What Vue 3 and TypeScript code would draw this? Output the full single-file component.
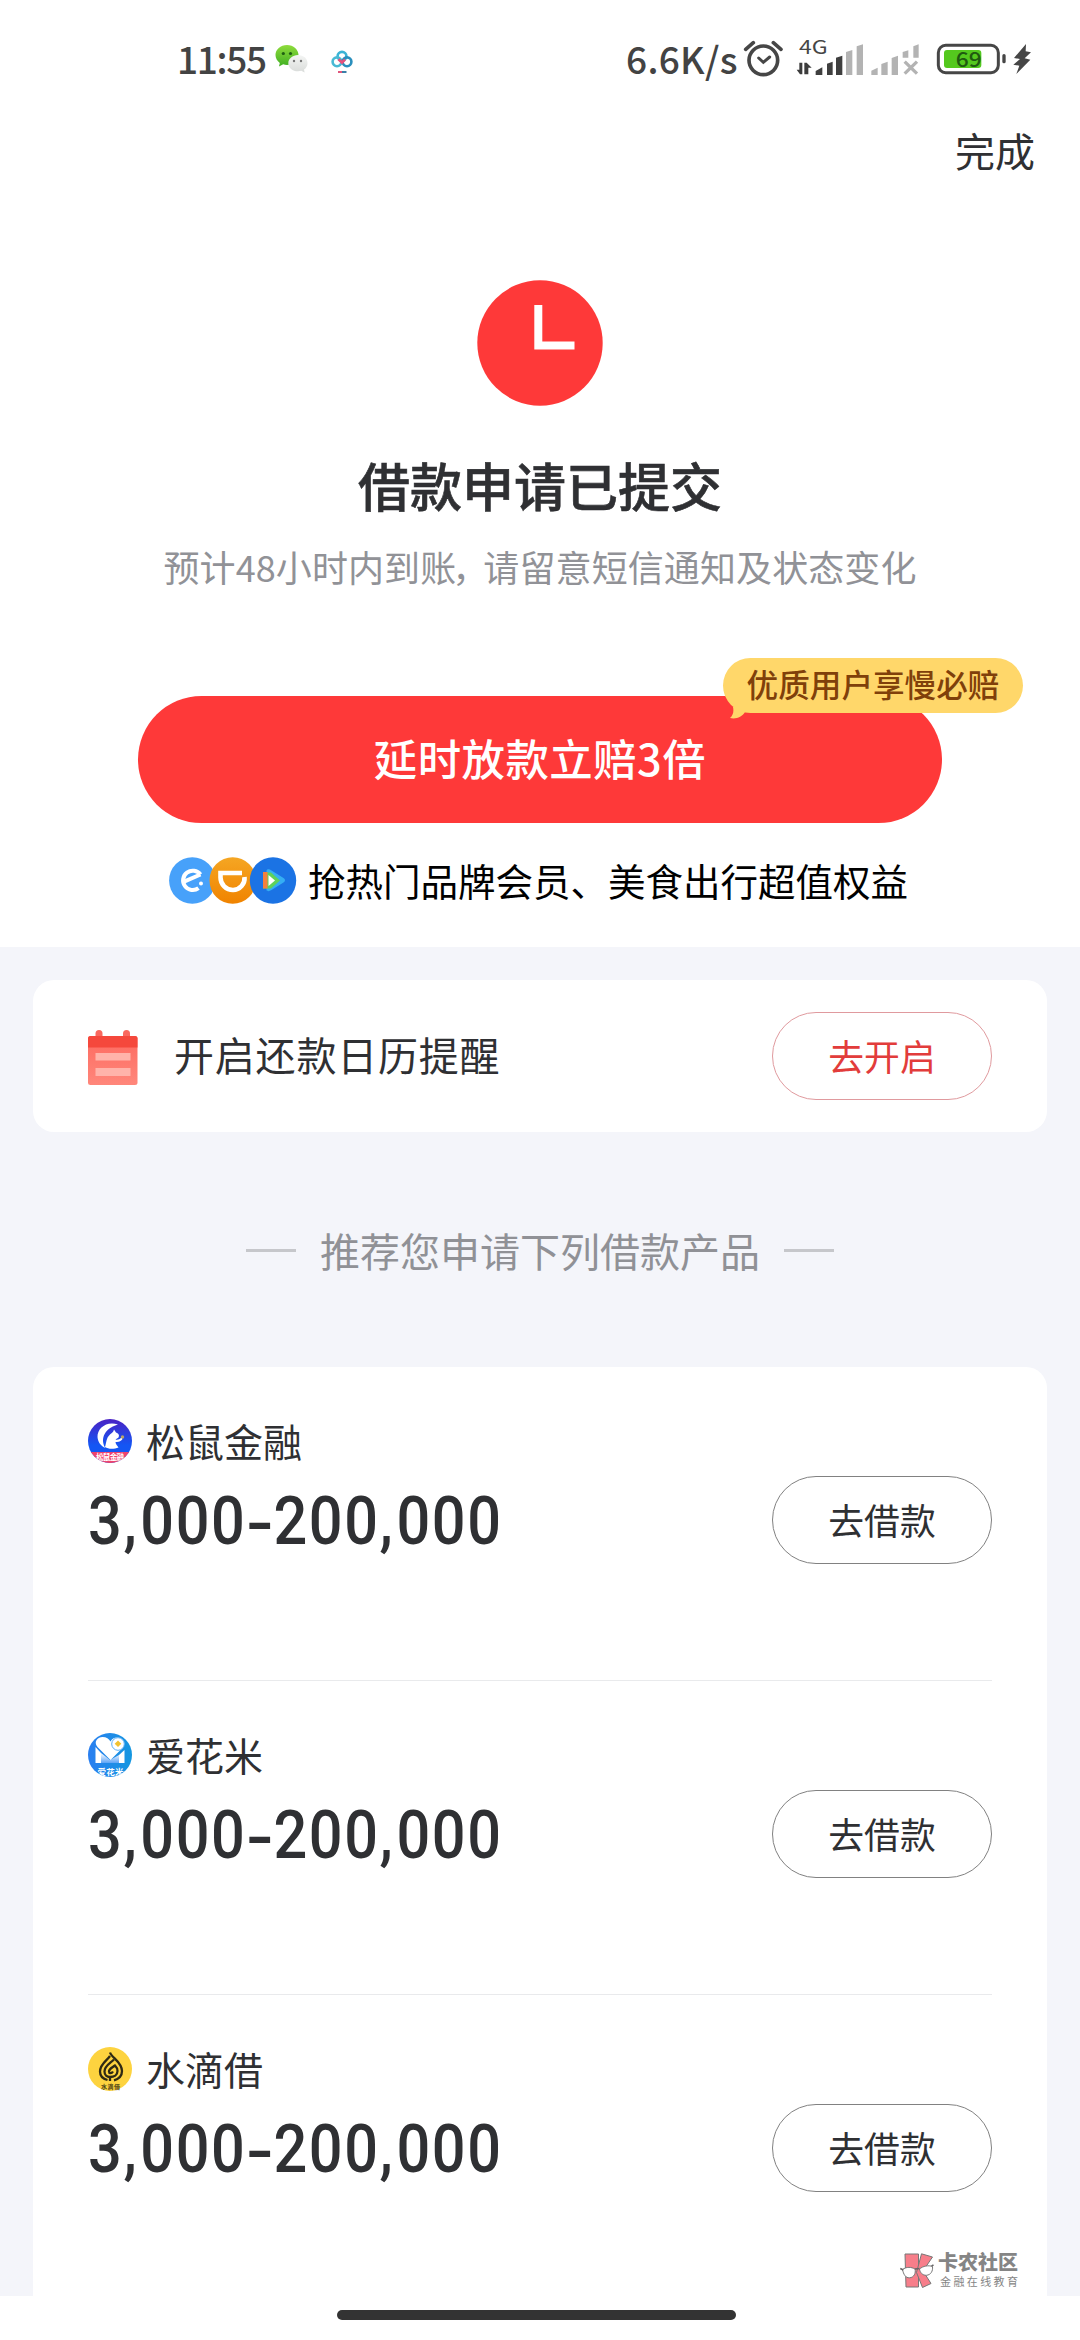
<script setup lang="ts">
interface Product {
  id: 'squirrel' | 'heart' | 'drop'
  name: string
  amount: string
}

const products: Product[] = [
  { id: 'squirrel', name: '松鼠金融', amount: '3,000-200,000' },
  { id: 'heart', name: '爱花米', amount: '3,000-200,000' },
  { id: 'drop', name: '水滴借', amount: '3,000-200,000' },
]

// Splits an amount into digit groups and separators, which are spaced differently
const amountParts = (amount: string): string[] => amount.split(/([,-])/)
const partClass = (part: string): string =>
  part === ',' ? 'comma' : part === '-' ? 'dash' : 'digits'
</script>

<template>
  <div class="screen">
    <header class="status">
      <span class="time">11:55</span>
      <svg class="wechat" width="33" height="30" viewBox="0 0 33 30">
        <defs>
          <linearGradient id="wg" x1="0" y1="0" x2="0" y2="1">
            <stop offset="0" stop-color="#8fdc3c" /><stop offset="1" stop-color="#3fae22" />
          </linearGradient>
          <linearGradient id="wh" x1="0" y1="0" x2="0" y2="1">
            <stop offset="0" stop-color="#f4f5f4" /><stop offset="1" stop-color="#d9dcda" />
          </linearGradient>
        </defs>
        <path d="M12 1C5.500 1 .5 5.500 .5 11c0 3.300 1.700 6 4.300 7.900L4 22.500l4.200-2.200c1.200.4 2.500.6 3.800.6 6.500 0 11.500-4.500 11.500-9.900S18.500 1 12 1z" fill="url(#wg)" />
        <circle cx="8.300" cy="9.500" r="1.600" fill="#1f5f12" /><circle cx="15.500" cy="9.500" r="1.600" fill="#1f5f12" />
        <path d="M23 11c5.500 0 9.500 3.600 9.500 8.200 0 2.600-1.400 4.900-3.500 6.400l.6 2.900-3.300-1.700c-1 .3-2.200.5-3.300.5-5.500 0-9.700-3.600-9.700-8.100S17.500 11 23 11z" fill="url(#wh)" />
        <circle cx="19" cy="17" r="1.200" fill="#777" /><circle cx="26" cy="17" r="1.200" fill="#777" />
      </svg>
      <svg class="cloud" width="22" height="24" viewBox="0 0 22 24">
        <g fill="none" stroke-width="2.600">
          <circle cx="11" cy="6.300" r="4.400" stroke="#3bb4d6" />
          <circle cx="6" cy="11.800" r="4.400" stroke="#49b9d4" />
          <circle cx="16" cy="11.800" r="4.400" stroke="#2a8fbd" />
          <path d="M7.500 9.200L12 13.500M14 9.500l-2.500 2.500" stroke="#e8507c" />
        </g>
        <path d="M7 22h4" stroke="#e0567c" stroke-width="2" /><path d="M11 22h4.500" stroke="#3a7fa8" stroke-width="2" />
      </svg>
      <span class="speed">6.6K/s</span>
      <svg class="signals" width="290" height="50" viewBox="402 42 870 150">
        <g fill="none" stroke="#464646" stroke-linecap="round">
          <circle cx="460" cy="121" r="43" stroke-width="11" />
          <path d="M407 88L430 68M513 88L490 68" stroke-width="11" />
          <path d="M446 114l14 13 19-16" stroke-width="9" />
        </g>
        <text x="567" y="103" font-size="56" textLength="86" lengthAdjust="spacingAndGlyphs" class="gen">4G</text>
        <path d="M577 128v35h-7l-10-14h8v-21zM583 163v-35h7l15 15h-10v20z" fill="#3c3c3c" />
        <g fill="#3f3f3f">
          <path d="M617 153l20-11v23h-20zM651 131l17-6v40h-17zM678 113l19-6v58h-19z" />
        </g>
        <g fill="#b3b3b3">
          <path d="M708 96l19-6v75h-19zM740 79l19-6v92h-19z" />
          <path d="M784 152l19-9v22h-19zM814 132l19-7v40h-19zM845 114l19-7v58h-19zM878 96l17-5v22h-17zM910 79l16-6v40h-16z" />
        </g>
        <path d="M884 125l37 36M921 125l-37 36" stroke="#b3b3b3" stroke-width="10" />
        <rect x="985" y="76" width="180" height="82" rx="22" fill="#fff" stroke="#464646" stroke-width="9" />
        <rect x="1002" y="90" width="112" height="54" rx="9" fill="#54c81e" />
        <rect x="1177" y="102" width="10" height="28" rx="5" fill="#464646" />
        <text x="1037" y="140" font-size="62" textLength="78" lengthAdjust="spacingAndGlyphs" class="level">69</text>
        <path d="M1248 72l-36 42 18 3-20 17 18 3-9 25 42-43-17-4 19-18-16-3z" fill="#464646" />
      </svg>
    </header>

    <nav class="nav"><span>完成</span></nav>

    <section class="hero">
      <svg class="clock" width="126" height="126" viewBox="0 0 126 126">
        <circle cx="63" cy="63" r="62.700" fill="#fe3939" />
        <path d="M61.300 25v40.500H97.500" fill="none" stroke="#fff" stroke-width="8" />
      </svg>
      <h1>借款申请已提交</h1>
      <p class="hint">预计48小时内到账<span class="pause">，</span>请留意短信通知及状态变化</p>
      <div class="cta">
        <button class="primary" type="button">延时放款立赔3倍</button>
        <span class="badge">优质用户享慢必赔
          <svg class="tail" width="18" height="12" viewBox="0 0 18 12"><path d="M3 0C4 5 3 8 0 11c6 1.500 12-1 15-6h3V0z" fill="#ffd76a" /></svg>
        </span>
      </div>
      <div class="perks">
        <svg width="128" height="47" viewBox="0 0 128 47">
          <defs>
            <linearGradient id="og" x1="0" y1="0" x2="0" y2="1">
              <stop offset="0" stop-color="#f5a623" /><stop offset="1" stop-color="#f08300" />
            </linearGradient>
          </defs>
          <circle cx="23.300" cy="23.500" r="23.200" fill="#47a1fa" />
          <path d="M31.500 17.500A9.700 9.700 0 1 0 29.500 31.200M14.500 24.800L31.500 17.500" fill="none" stroke="#fff" stroke-width="4" />
          <circle cx="32" cy="26.500" r="2" fill="#fff" />
          <circle cx="63.700" cy="23.500" r="23.200" fill="url(#og)" />
          <path d="M73 16H51.500v4.500A12.500 12.500 0 0 0 64 33a11.800 11.800 0 0 0 11.500-13" fill="none" stroke="#fff" stroke-width="4.600" />
          <circle cx="104" cy="23.500" r="23.200" fill="#1b73e4" />
          <path d="M97.500 13.500c1-1.800 3-1.300 5 0l12 7.500c2 1.300 2 3.200 0 4.500l-12 7.500c-2 1.300-4.500 1.800-5 0z" fill="#35aef3" />
          <path d="M94 15.500h8l9 8-9 8h-8z" fill="#5fd25a" />
          <path d="M94 15h4.500v16.500H94z" fill="#f5803c" />
          <path d="M99.500 18l6.500 5.500-6.500 5.500z" fill="#fff" />
        </svg>
        <span>抢热门品牌会员、美食出行超值权益</span>
      </div>
    </section>

    <main class="body">
      <section class="reminder">
        <svg class="calendar" width="50" height="56" viewBox="0 0 50 56">
          <defs>
            <linearGradient id="cg" x1="0" y1="0" x2="0" y2="1">
              <stop offset="0" stop-color="#fd6a60" /><stop offset="1" stop-color="#ff877b" />
            </linearGradient>
          </defs>
          <rect x="7.500" y="0" width="7" height="12" rx="3.500" fill="#f9685e" />
          <rect x="35" y="0" width="7" height="12" rx="3.500" fill="#f9685e" />
          <rect x="0" y="6" width="49.500" height="49" rx="2.500" fill="url(#cg)" />
          <path d="M0 17.500V8.500Q0 6 2.500 6H47Q49.500 6 49.500 8.500v9z" fill="#f5483c" />
          <path d="M7.500 23h35v7.500h-35zM7.500 38h35v8h-35z" fill="#ffb3aa" />
        </svg>
        <span class="label">开启还款日历提醒</span>
        <button class="pill red" type="button">去开启</button>
      </section>

      <div class="heading"><i></i><span>推荐您申请下列借款产品</span><i></i></div>

      <section class="products">
        <article v-for="p in products" :key="p.id" class="product">
          <div class="info">
            <div class="brand">
              <svg v-if="p.id === 'squirrel'" width="44" height="44" viewBox="0 0 44 44">
                <defs>
                  <clipPath id="c1"><circle cx="22" cy="22" r="22" /></clipPath>
                  <linearGradient id="sg" x1="0" y1="0" x2="0" y2="1">
                    <stop offset="0" stop-color="#4a22c4" /><stop offset=".6" stop-color="#1456f4" />
                  </linearGradient>
                </defs>
                <g clip-path="url(#c1)">
                  <rect width="44" height="44" fill="url(#sg)" />
                  <path d="M30 5.500C19 1.500 9 9 9.500 18c.3 5 3.500 9 8 11-5-7-3-19 12.500-23.500z" fill="#fff" />
                  <path d="M17 28c1.500-4 1-9 5-12.500 1.500-1.500 3.500-2 4-5l2 3c3 1 3.500 3 2.500 5l-3 2c2 .5 4 0 6-2l1 1.500c-2 3-5 3-7 3 0 2 2 4 3 5.500-4 1.500-10 2-13.500-.5z" fill="#fff" />
                  <circle cx="34.500" cy="18" r="1.700" fill="#b9a36a" />
                  <rect y="33" width="44" height="11" fill="#f0436c" />
                  <text x="8" y="41" font-size="7.500" textLength="28" class="mini">松鼠金融</text>
                </g>
              </svg>
              <svg v-else-if="p.id === 'heart'" width="44" height="44" viewBox="0 0 44 44">
                <defs>
                  <clipPath id="c2"><circle cx="22" cy="22" r="22" /></clipPath>
                  <linearGradient id="hg" x1="0" y1="0" x2="1" y2="0">
                    <stop offset="0" stop-color="#2a7ff0" /><stop offset="1" stop-color="#1597e0" />
                  </linearGradient>
                  <linearGradient id="mg" x1="0" y1="0" x2="0" y2="1">
                    <stop offset="0" stop-color="#fff" /><stop offset="1" stop-color="#5fa4f6" />
                  </linearGradient>
                </defs>
                <g clip-path="url(#c2)">
                  <rect width="44" height="44" fill="url(#hg)" />
                  <path d="M7.500 14v16h5.500V20z" fill="#fff" />
                  <path d="M31 22l5.500-5v13H31z" fill="#fff" />
                  <path d="M13 20v10h18V22l-9 5z" fill="url(#mg)" />
                  <path d="M22.500 27L9.500 14C5 8.500 10 4 14.500 4c4 0 6.500 2 8 4.500C24 5.500 27 4 30 4.500c6 1 8 6.500 4.500 10.500z" fill="#fff" />
                  <circle cx="30" cy="11" r="6.300" fill="#fff" stroke="#5caef5" stroke-width="1" />
                  <path d="M30 7.500l3.300 3.300L30 14l-3.300-3.200z" fill="#f2c230" />
                  <text x="9.500" y="41.500" font-size="8.500" textLength="26" class="mini">爱花米</text>
                </g>
              </svg>
              <svg v-else width="44" height="44" viewBox="0 0 44 44">
                <circle cx="22" cy="22" r="22" fill="#fdd33f" />
                <g fill="none" stroke="#2f2a14" stroke-width="2.300">
                  <path d="M22 5.500c1.500 5 12 9.500 12 18.500 0 5-3.500 8-8 9.300M22 9c-3 4.500-10 8-10 15.500 0 4.500 3.500 7.500 7.500 8.500" />
                  <path d="M26 12.500c-4 4-9.500 6.500-9.500 12 0 3.500 2.500 5.500 5.500 5.500 4 0 7.500-2 7.500-6 0-2.500-1-4-2.500-5.500-2.500 2-6 3-6 6 0 2 2.500 2.500 4 0" />
                  <path d="M22 29v5" />
                </g>
                <text x="13" y="41.800" font-size="6" textLength="19" class="mini dark">水滴借</text>
              </svg>
              <span>{{ p.name }}</span>
            </div>
            <div class="amount"><span v-for="(part, i) in amountParts(p.amount)" :key="i" :class="partClass(part)">{{ part }}</span></div>
          </div>
          <button class="pill" type="button">去借款</button>
        </article>
      </section>
    </main>

    <footer class="gesture"><i></i></footer>

    <aside class="mark">
      <svg width="34" height="36" viewBox="0 0 34 36">
        <g fill="#f77e8a" stroke="#777" stroke-width="1">
          <path d="M5 1h13.500v33H6z" />
          <path d="M21.500 .8l11 3.200-9.500 14 8 12.500-8.500 4-6-15z" />
        </g>
        <g fill="#fff" stroke="#777" stroke-width="1">
          <path d="M2.500 16.500c4-3 9-2.500 12.500-.5 1 4-.8 8.500-5.500 8.800-4 .2-6-3.500-7-8.300z" />
          <path d="M19.500 16c3.500-3 9-4 13-2.500.5 4.500-1.500 8.300-6 8.800-4 .2-6.500-2.800-7-6.300z" />
        </g>
        <path d="M.3 15.500l3 1.500M15 16l4.500-.5M31.500 13l2-1" stroke="#666" stroke-width="1.500" />
      </svg>
      <div class="mark-text"><b>卡农社区</b><small>金融在线教育</small></div>
    </aside>
  </div>
</template>

<style>
body {
  background: #fff;
}
</style>

<style scoped>
.screen {
  position: relative;
  display: flex;
  flex-direction: column;
  width: 1080px;
  height: 2340px;
  overflow: hidden;
  background: #fff;
  color: #2f3033;
  font-family: 'Noto Sans CJK SC', sans-serif;
}
button {
  margin: 0;
  padding: 0;
  font-family: inherit;
}
.status {
  display: flex;
  align-items: center;
  box-sizing: border-box;
  height: 104px;
  padding: 14px 46px 0 177px;
  color: #434343;
  font-weight: 500;
  font-size: 37px;
  line-height: 50px;
}
.time {
  width: 98px;
  margin-top: -2px;
  letter-spacing: -1.300px;
  white-space: nowrap;
}
.cloud {
  margin-left: 23px;
  margin-top: 6px;
}
.speed {
  margin-left: auto;
  margin-top: -2px;
  width: 118px;
  letter-spacing: 0.300px;
  white-space: nowrap;
}
.signals {
  overflow: visible;
}
.gen {
  fill: #464646;
  font-family: 'Noto Sans CJK SC', sans-serif;
  font-weight: 400;
}
.level {
  fill: #1f5a10;
  font-family: 'Noto Sans CJK SC', sans-serif;
  font-weight: 500;
}
.nav {
  display: flex;
  justify-content: flex-end;
  height: 92px;
  padding-right: 45px;
  font-size: 40px;
  line-height: 92px;
}
.hero {
  display: flex;
  flex-direction: column;
  align-items: center;
  box-sizing: border-box;
  height: 751px;
  padding-top: 84px;
}
h1 {
  margin: 43px 0 0;
  font-size: 52px;
  font-weight: 500;
  line-height: 72px;
  -webkit-text-stroke: 0.6px #2f3033;
}
.hint {
  margin: 21px 0 0;
  color: #919297;
  font-size: 36px;
  letter-spacing: 0.100px;
  line-height: 48px;
}
.pause {
  margin: 0 4px 0 -4px;
  letter-spacing: -9px;
}
.cta {
  position: relative;
  margin-top: 106px;
}
.primary {
  display: block;
  width: 804px;
  height: 127px;
  padding-bottom: 5px;
  border: 0;
  border-radius: 64px;
  background: #fe3939;
  color: #fff;
  font-size: 43.400px;
  font-weight: 500;
  letter-spacing: 0.500px;
}
.badge {
  position: absolute;
  top: -38px;
  left: 585px;
  width: 300px;
  height: 55px;
  border-radius: 28px;
  background: #ffd76a;
  color: #80400a;
  font-size: 31.600px;
  font-weight: 500;
  line-height: 51px;
  text-align: center;
}
.tail {
  position: absolute;
  left: 7px;
  top: 49px;
}
.perks {
  display: flex;
  align-items: center;
  height: 47px;
  margin-top: 34px;
  margin-right: 3px;
  gap: 11px;
  color: #000;
  font-size: 37.500px;
  line-height: 43px;
}
.perks span {
  margin-top: -2px;
}
.body {
  box-sizing: border-box;
  height: 1349px;
  padding: 33px 33px 0;
  overflow: hidden;
  background: #f4f5fa;
}
.reminder {
  display: flex;
  align-items: center;
  box-sizing: border-box;
  height: 152px;
  padding: 0 55px;
  border-radius: 21px;
  background: #fff;
}
.calendar {
  margin-top: 3px;
}
.label {
  margin: -4px auto 0 36px;
  font-size: 40px;
  letter-spacing: 0.800px;
  line-height: 58px;
}
.pill {
  box-sizing: border-box;
  width: 220px;
  height: 88px;
  padding-bottom: 3px;
  border: 1px solid #818181;
  border-radius: 44px;
  background: #fff;
  color: #2f3033;
  font-size: 35.800px;
}
.pill.red {
  border-color: #e09a9e;
  color: #e23c3b;
}
.heading {
  display: flex;
  align-items: center;
  justify-content: center;
  gap: 24px;
  height: 60px;
  margin-top: 88px;
  color: #909196;
  font-size: 40px;
  line-height: 60px;
}
.heading i {
  width: 50px;
  height: 3px;
  background: #c6c7cb;
}
.products {
  height: 960px;
  margin-top: 87px;
  padding: 0 55px;
  border-radius: 21px;
  background: #fff;
}
.product {
  display: flex;
  justify-content: space-between;
  box-sizing: border-box;
  height: 314px;
  padding-top: 52px;
  border-bottom: 1px solid #e9eaec;
}
.product .pill {
  margin-top: 57px;
}
.brand {
  display: flex;
  align-items: center;
  gap: 14px;
  height: 44px;
  font-size: 39px;
  line-height: 44px;
}
.brand span {
  margin-top: -3px;
}
.mini {
  fill: #fff;
  font-weight: 700;
}
.mini.dark {
  fill: #4a3f14;
}
.amount {
  width: 460px;
  margin-top: 21px;
  color: #2f3033;
  font-family: Roboto, sans-serif;
  font-size: 66px;
  font-weight: 500;
  line-height: 76px;
  white-space: nowrap;
  transform: scaleX(0.9);
  transform-origin: 0 50%;
}
.digits {
  letter-spacing: 1.800px;
}
.comma {
  letter-spacing: 4px;
}
.dash {
  display: inline-block;
  width: 30px;
  text-align: center;
  transform: translateY(2px) scaleX(1.350);
}
.gesture {
  display: flex;
  justify-content: center;
  height: 44px;
}
.gesture i {
  width: 399px;
  height: 10px;
  margin-top: 14px;
  margin-right: 7px;
  border-radius: 5px;
  background: #333;
}
.mark {
  position: absolute;
  left: 900px;
  top: 2253px;
  display: flex;
  gap: 4px;
}
.mark-text {
  display: flex;
  flex-direction: column;
  color: #858585;
  white-space: nowrap;
}
.mark-text b {
  margin-top: -1px;
  font-size: 20px;
  font-weight: 900;
  line-height: 20px;
}
.mark-text small {
  margin-top: 3px;
  padding-left: 2px;
  font-size: 11px;
  letter-spacing: 2.400px;
  line-height: 12px;
}
</style>
